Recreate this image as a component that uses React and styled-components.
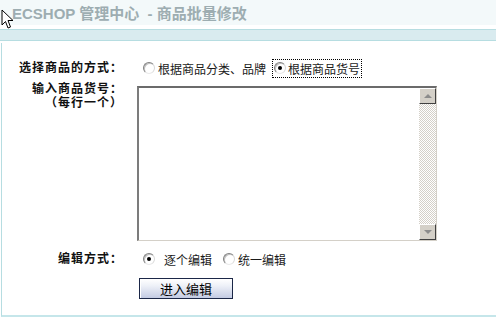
import React from 'react';
import styled, { createGlobalStyle } from 'styled-components';

const GlobalStyle = createGlobalStyle`
  html, body {
    margin: 0;
    padding: 0;
    background: #ffffff;
  }
  body {
    width: 496px;
    height: 319px;
    overflow: hidden;
    font-family: "Liberation Sans", "Noto Sans CJK SC", sans-serif;
    font-size: 12px;
    color: #1a1a1a;
  }
`;

const Page = styled.div`
  position: relative;
  width: 496px;
  height: 319px;
  display: flex;
  flex-direction: column;
`;

const Header = styled.div`
  height: 25px;
  background: #f3f9fa;
  display: flex;
  align-items: center;
  padding-left: 12px;
  box-sizing: border-box;
`;

const Title = styled.h1`
  margin: 0;
  font-size: 15px;
  font-weight: bold;
  color: #9dadb1;
  white-space: pre;
`;

const Strip = styled.div`
  margin-top: 4px;
  height: 10px;
  background: #d9ebef;
  border-top: 1px solid #b6dde1;
  border-bottom: 1px solid #b6dde1;
`;

const Panel = styled.div`
  margin: 2px 0 2px 1px;
  flex: 1;
  border-left: 1px solid #b6dde1;
  border-bottom: 2px solid #c5e6ea;
  padding-top: 16px;
  display: grid;
  grid-template-columns: 121px 1fr;
  grid-auto-rows: min-content;
  column-gap: 14px;
  row-gap: 9px;
`;

const Label = styled.div`
  text-align: right;
  font-weight: bold;
  font-size: 12px;
  letter-spacing: 1px;
  line-height: ${p => p.lh || 12}px;
  padding-top: ${p => (p.top === undefined ? 3 : p.top)}px;
  margin-top: ${p => p.mt || 0}px;
  color: #111;
  font-family: "Liberation Sans", "Noto Sans CJK SC", sans-serif;
  white-space: nowrap;
`;

const Field = styled.div`
  display: flex;
  align-items: center;
  height: ${p => p.h || 18}px;
  margin-top: ${p => p.mt || 0}px;
  font-family: "Noto Sans CJK SC", sans-serif;
`;

const Option = styled.label`
  display: flex;
  align-items: center;
  margin-left: ${p => p.ml || 0}px;
  padding: 0 ${p => (p.focus ? 1 : 0)}px;
  height: 17px;
  outline: ${p => (p.focus ? '1px dotted #000' : 'none')};
  box-sizing: border-box;
`;

const Radio = styled.span`
  position: relative;
  width: 10px;
  height: 10px;
  border-radius: 50%;
  border: 1px solid;
  border-color: #808080 #d8d8d8 #e8e8e8 #808080;
  background: #ffffff;
  box-shadow: inset 1px 1px 0 #c0c0c0;
  margin-right: ${p => p.gap || 3}px;
  flex-shrink: 0;

  &::after {
    content: '';
    display: ${p => (p.checked ? 'block' : 'none')};
    position: absolute;
    left: 3px;
    top: 3px;
    width: 4px;
    height: 4px;
    border-radius: 50%;
    background: #000;
  }
`;

const OptionText = styled.span`
  color: #1a1a1a;
  font-size: 12px;
  line-height: 17px;
`;

const TextBox = styled.div`
  width: 300px;
  height: 155px;
  box-sizing: border-box;
  border-style: solid;
  border-width: 2px 1px 1px 2px;
  border-color: #6b6b6b #d4d0c8 #d4d0c8 #7c7c7c;
  background: #ffffff;
  display: flex;
  justify-content: flex-end;
`;

const ScrollBar = styled.div`
  width: 17px;
  display: flex;
  flex-direction: column;
  background-color: #ffffff;
  background-image: repeating-conic-gradient(#d4d0c8 0 25%, #ffffff 0 50%);
  background-size: 2px 2px;
`;

const Track = styled.div`
  flex: 1;
`;

const ArrowButton = styled.div`
  height: 16px;
  box-sizing: border-box;
  background: #d4d0c8;
  border-style: solid;
  border-width: 1px;
  border-color: #ffffff #404040 #404040 #ffffff;
  display: flex;
  align-items: center;
  justify-content: center;

  &::before {
    content: '';
    width: 0;
    height: 0;
    border-left: 4px solid transparent;
    border-right: 4px solid transparent;
    ${p => (p.down
      ? 'border-top: 4px solid #8c8c8c;'
      : 'border-bottom: 4px solid #8c8c8c;')}
  }
`;

const SubmitButton = styled.button`
  width: 94px;
  height: 21px;
  margin-left: 2px;
  padding: 0;
  border: 1px solid #1b2747;
  box-shadow: inset 1px 1px 0 #ffffff;
  background: linear-gradient(#ffffff 0%, #eef1f8 35%, #c3cbe3 100%);
  font-family: "Noto Sans CJK SC", sans-serif;
  font-size: 13px;
  color: #000;
  line-height: 19px;
`;

const Cursor = styled.svg`
  position: absolute;
  left: 1px;
  top: 9px;
`;

export default function App() {
  return (
    <Page>
      <GlobalStyle />
      <Header>
        <Title>{'ECSHOP 管理中心  - 商品批量修改'}</Title>
      </Header>
      <Strip />
      <Panel>
        <Label>选择商品的方式：</Label>
        <Field>
          <Option ml={6}>
            <Radio />
            <OptionText>根据商品分类、品牌</OptionText>
          </Option>
          <Option ml={7} focus>
            <Radio checked gap={2} />
            <OptionText>根据商品货号</OptionText>
          </Option>
        </Field>

        <Label top={0} lh={14} mt={-4}>
          输入商品货号：
          <br />
          （每行一个）
        </Label>
        <TextBox>
          <ScrollBar>
            <ArrowButton />
            <Track />
            <ArrowButton down />
          </ScrollBar>
        </TextBox>

        <Label>编辑方式：</Label>
        <Field>
          <Option ml={6}>
            <Radio checked gap={9} />
            <OptionText>逐个编辑</OptionText>
          </Option>
          <Option ml={11}>
            <Radio gap={3} />
            <OptionText>统一编辑</OptionText>
          </Option>
        </Field>

        <div />
        <Field h={21} mt={1}>
          <SubmitButton type="button">进入编辑</SubmitButton>
        </Field>
      </Panel>
      <Cursor width="13" height="21" viewBox="0 0 13 21">
        <path
          d="M1 1 L1 16 L4.5 12.5 L7 19 L9.5 18 L7 11.5 L12 11.5 Z"
          fill="#ffffff"
          stroke="#000000"
          strokeWidth="1"
        />
      </Cursor>
    </Page>
  );
}
